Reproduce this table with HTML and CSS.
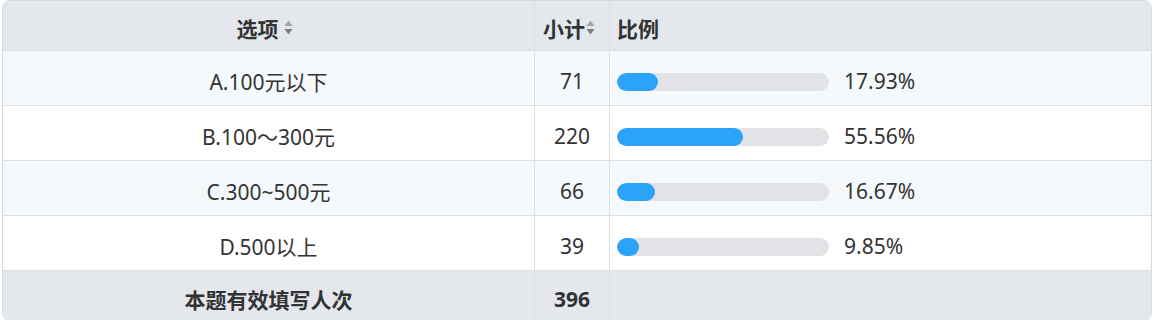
FILE: index.html
```html
<!DOCTYPE html>
<html lang="zh-CN">
<head>
<meta charset="utf-8">
<link rel="stylesheet" href="styles.css">
</head>
<body>
<div class="stat-table">
  <div class="row head">
    <div class="cell c-opt"><span>选项</span><svg class="sort" viewBox="0 0 9 15" width="9" height="15"><path d="M4.5 0.5 L8.5 6 L0.5 6 Z" fill="#a3a3a3"/><path d="M4.5 14.5 L8.5 9 L0.5 9 Z" fill="#7f7f7f"/></svg></div>
    <div class="cell c-cnt tight"><span>小计</span><svg class="sort" viewBox="0 0 9 15" width="9" height="15"><path d="M4.5 0.5 L8.5 6 L0.5 6 Z" fill="#a3a3a3"/><path d="M4.5 14.5 L8.5 9 L0.5 9 Z" fill="#7f7f7f"/></svg></div>
    <div class="cell c-pct left">比例</div>
  </div>
  <div class="row odd">
    <div class="cell c-opt">A.100元以下</div>
    <div class="cell c-cnt">71</div>
    <div class="cell c-pct left"><div class="bar"><div class="fill" style="width:19.3%"></div></div><span class="pct">17.93%</span></div>
  </div>
  <div class="row">
    <div class="cell c-opt">B.100～300元</div>
    <div class="cell c-cnt">220</div>
    <div class="cell c-pct left"><div class="bar"><div class="fill" style="width:59.4%"></div></div><span class="pct">55.56%</span></div>
  </div>
  <div class="row odd">
    <div class="cell c-opt">C.300~500元</div>
    <div class="cell c-cnt">66</div>
    <div class="cell c-pct left"><div class="bar"><div class="fill" style="width:17.9%"></div></div><span class="pct">16.67%</span></div>
  </div>
  <div class="row">
    <div class="cell c-opt">D.500以上</div>
    <div class="cell c-cnt">39</div>
    <div class="cell c-pct left"><div class="bar"><div class="fill" style="width:10.4%"></div></div><span class="pct">9.85%</span></div>
  </div>
  <div class="row foot">
    <div class="cell c-opt">本题有效填写人次</div>
    <div class="cell c-cnt">396</div>
    <div class="cell c-pct left"></div>
  </div>
</div>
</body>
</html>
```
FILE: styles.css
```css
html, body {
  margin: 0;
  padding: 0;
  background: #ffffff;
}
body {
  padding: 0 2px 0 2px;
  font-family: "Noto Sans", "Noto Sans CJK SC", sans-serif;
  font-size: 21px;
  color: #333333;
}
.stat-table {
  width: 1150px;
  box-sizing: border-box;
  border: 1px solid #d6d9de;
  border-radius: 8px;
  overflow: hidden;
}
.row {
  display: grid;
  grid-template-columns: 532px 75px 1fr;
  height: 55px;
  box-sizing: border-box;
  border-bottom: 1px solid #dcdfe4;
  background: #ffffff;
}
.row.odd {
  background: #f6f9fc;
}
.row.head {
  height: 50px;
  background: #e4e7ec;
  font-weight: bold;
}
.row.foot {
  height: 49px;
  border-bottom: none;
  background: #e4e7ec;
  font-weight: bold;
}
.cell {
  display: flex;
  align-items: center;
  justify-content: center;
  box-sizing: border-box;
  padding-top: 6px;
  border-right: 1px solid #dcdfe4;
  white-space: nowrap;
}
.cell.c-pct {
  border-right: none;
}
.cell.left {
  justify-content: flex-start;
  padding-left: 7px;
}
.head .cell {
  padding-top: 4px;
}
.sort {
  margin-left: 5px;
  margin-right: 8px;
}
.tight .sort {
  margin-left: 1px;
  margin-right: 6px;
}
.bar {
  width: 212px;
  height: 18px;
  border-radius: 9px;
  background: #e2e3e6;
  overflow: hidden;
  margin-top: 2px;
  flex: none;
}
.fill {
  height: 100%;
  border-radius: 9px;
  background: #2aa3f8;
}
.pct {
  margin-left: 15px;
}
```
